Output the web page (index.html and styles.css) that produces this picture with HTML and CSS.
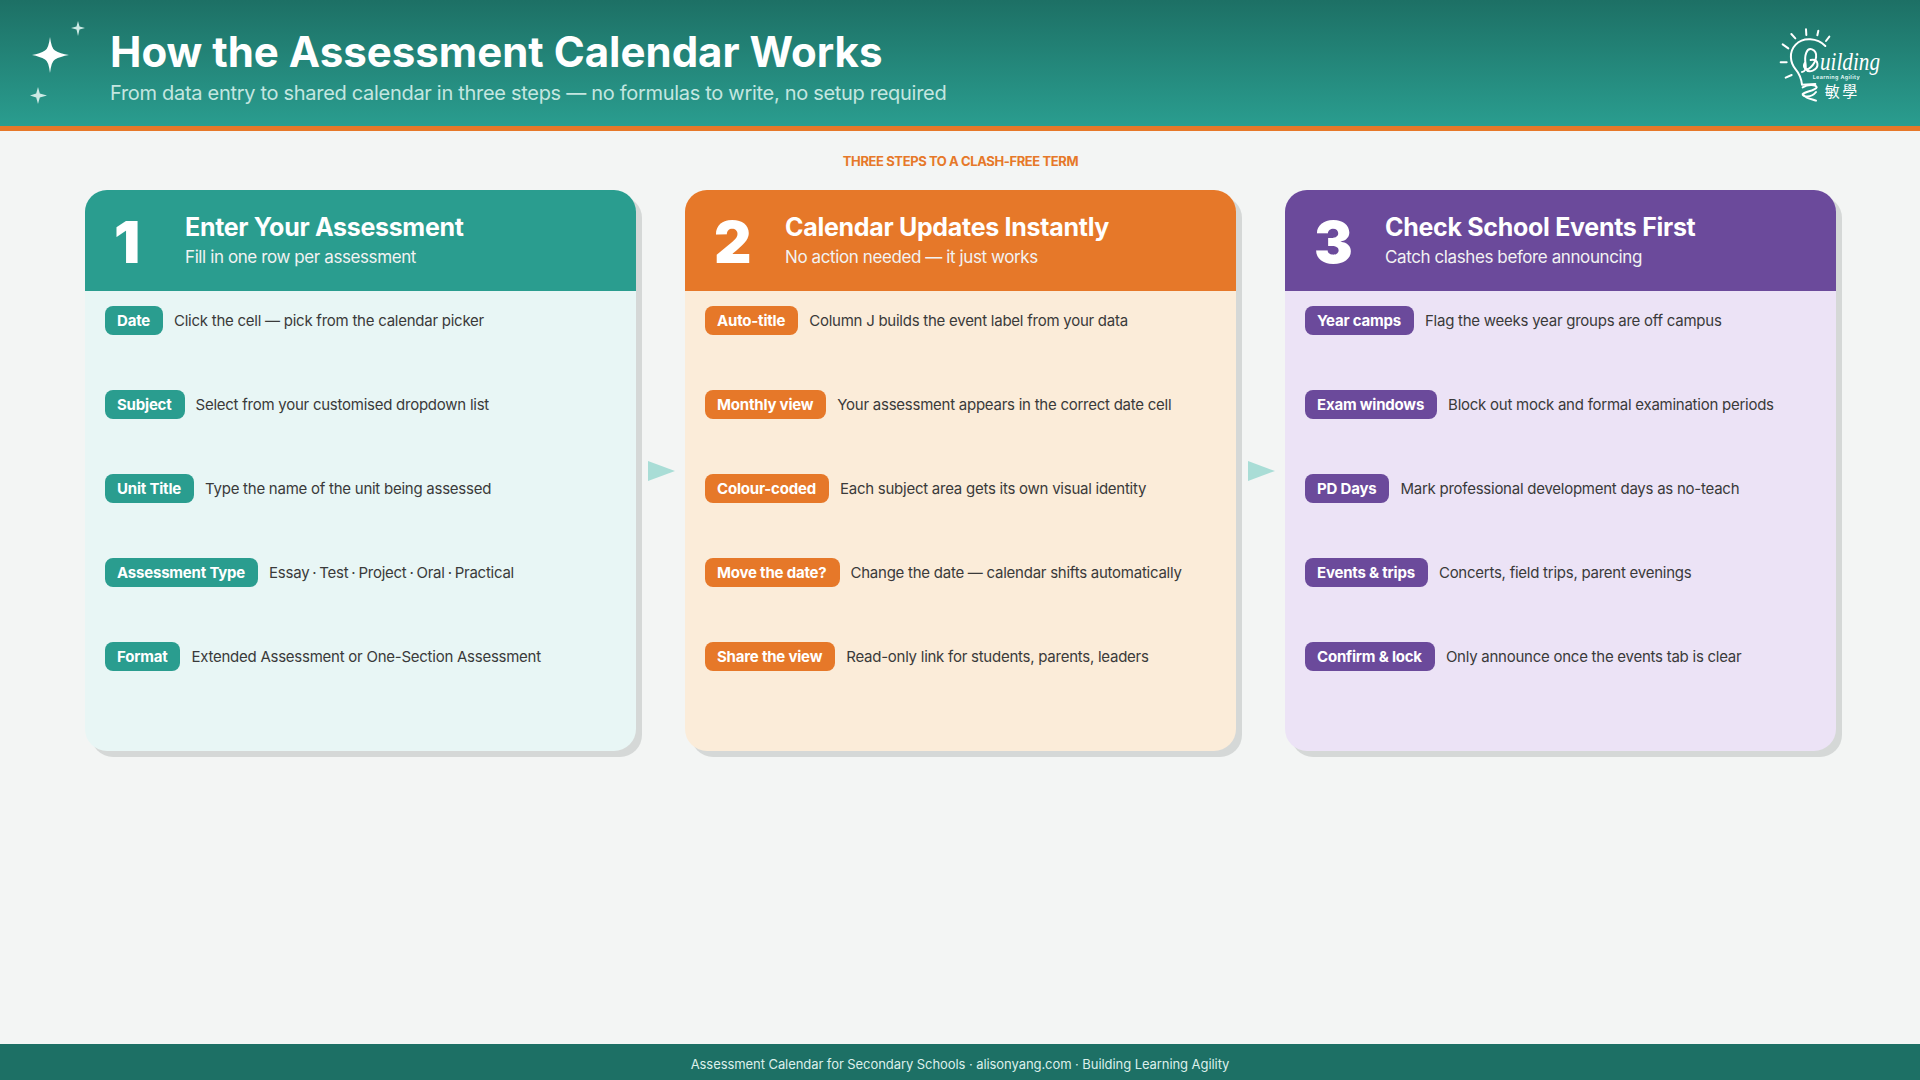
FILE: index.html
```html
<!DOCTYPE html>
<html lang="en">
<head>
<meta charset="utf-8">
<title>How the Assessment Calendar Works</title>
<link rel="stylesheet" href="styles.css">
</head>
<body>
<div class="page">
  <header class="top">
    <svg class="stars" viewBox="0 0 110 126" width="110" height="126" aria-hidden="true">
      <path class="star-a" d="M50 37 Q51.500 49 55 50.500 Q60 53.500 69 55 Q60 56.500 55 59.500 Q51.500 61 50 73 Q48.500 61 45 59.500 Q40 56.500 32 55 Q40 53.500 45 50.500 Q48.500 49 50 37 Z"/>
      <path class="star-b" d="M78 21 L79.500 26.500 L85 28 L79.500 29.500 L78 36 L76.500 29.500 L71 28 L76.500 26.500 Z"/>
      <path class="star-b" d="M38 87 L39.800 93.500 L47 95.500 L39.800 97.500 L38 104 L36.200 97.500 L30 95.500 L36.200 93.500 Z"/>
    </svg>
    <div class="top-text">
      <h1>How the Assessment Calendar Works</h1>
      <p>From data entry to shared calendar in three steps — no formulas to write, no setup required</p>
    </div>
    <svg class="logo" viewBox="0 0 540 330" width="180" height="110" aria-label="Building Learning Agility logo">
      <g class="logo-line">
        <path d="M198 58 L199 75M235 62 L232 76M268 80 L258 93M154 72 L166 85M128 103 L145 115M122 157 L140 157M137 203 L155 195"/>
        <path d="M256 108 C232 84 190 80 167 104 C146 126 150 158 167 178 C178 191 184 205 186 224 L226 222"/>
        <path d="M196 156 C186 172 198 185 212 172 C230 155 236 125 216 118 C200 113 192 135 197 165 C199 176 194 186 186 186"/>
        <path d="M212 150 C236 146 240 172 218 182 C208 186 200 182 196 176"/>
        <path d="M188 232 C205 222 228 224 230 232 C226 242 198 244 188 252 C186 262 214 264 228 246 M192 256 C200 266 220 268 228 272"/>
      </g>
      <text class="logo-script" x="240" y="180" textLength="180" lengthAdjust="spacingAndGlyphs">uilding</text>
      <text class="logo-small" x="218" y="208">Learning Agility</text>
      <text class="logo-cjk" x="254" y="260">敏學</text>
    </svg>
  </header>

  <main class="content">
    <div class="eyebrow">THREE STEPS TO A CLASH-FREE TERM</div>
    <div class="flow">
      <section class="card teal">
        <div class="card-head">
          <span class="num">1</span>
          <div><h2>Enter Your Assessment</h2><p>Fill in one row per assessment</p></div>
        </div>
        <ul class="rows">
          <li><b>Date</b><span>Click the cell — pick from the calendar picker</span></li>
          <li><b>Subject</b><span>Select from your customised dropdown list</span></li>
          <li><b>Unit Title</b><span>Type the name of the unit being assessed</span></li>
          <li><b>Assessment Type</b><span class="tight">Essay · Test · Project · Oral · Practical</span></li>
          <li><b>Format</b><span>Extended Assessment or One-Section Assessment</span></li>
        </ul>
      </section>
      <div class="arrow"></div>
      <section class="card orange">
        <div class="card-head">
          <span class="num">2</span>
          <div><h2>Calendar Updates Instantly</h2><p>No action needed — it just works</p></div>
        </div>
        <ul class="rows">
          <li><b>Auto-title</b><span>Column J builds the event label from your data</span></li>
          <li><b>Monthly view</b><span>Your assessment appears in the correct date cell</span></li>
          <li><b>Colour-coded</b><span>Each subject area gets its own visual identity</span></li>
          <li><b>Move the date?</b><span>Change the date — calendar shifts automatically</span></li>
          <li><b>Share the view</b><span>Read-only link for students, parents, leaders</span></li>
        </ul>
      </section>
      <div class="arrow"></div>
      <section class="card purple">
        <div class="card-head">
          <span class="num">3</span>
          <div><h2>Check School Events First</h2><p>Catch clashes before announcing</p></div>
        </div>
        <ul class="rows">
          <li><b>Year camps</b><span>Flag the weeks year groups are off campus</span></li>
          <li><b>Exam windows</b><span>Block out mock and formal examination periods</span></li>
          <li><b>PD Days</b><span>Mark professional development days as no-teach</span></li>
          <li><b>Events &amp; trips</b><span>Concerts, field trips, parent evenings</span></li>
          <li><b>Confirm &amp; lock</b><span>Only announce once the events tab is clear</span></li>
        </ul>
      </section>
    </div>
  </main>

  <footer class="bottom">Assessment Calendar for Secondary Schools · alisonyang.com · Building Learning Agility</footer>
</div>
</body>
</html>
```
FILE: styles.css
```css
* { box-sizing: border-box; }
html, body { margin: 0; padding: 0; }
body { font-family: Inter, "Noto Sans", sans-serif; background: #f3f5f4; color: #333; }
.page { width: 1920px; height: 1080px; display: flex; flex-direction: column; overflow: hidden; }

.top {
  height: 131px; flex: none; display: flex; align-items: flex-start;
  background: linear-gradient(180deg, #1d7065 0%, #2a9d8f 100%);
  border-bottom: 5px solid #e67829;
}
.stars { flex: none; display: block; }
.star-a { fill: #fff; }
.star-b { fill: #cdeae5; }
.top-text { flex: 1; padding-top: 26px; }
.top h1 { margin: 0; font-size: 42px; line-height: 52px; font-weight: 700; color: #fff; }
.top p { margin: 2px 0 0; font-size: 20px; line-height: 26px; color: #c4e6e0; letter-spacing: -0.3px; }
.logo { flex: none; margin: 10px 0 0; display: block; }
.logo-line { fill: none; stroke: #fff; stroke-width: 6; stroke-linecap: round; stroke-linejoin: round; }
.logo-script { font-family: "Liberation Serif", serif; font-style: italic; font-size: 76px; fill: #fff; }
.logo-small { font-family: Inter, sans-serif; font-weight: 700; font-size: 16px; letter-spacing: 1.200px; fill: #dff3ef; }
.logo-cjk { font-family: "Noto Sans CJK TC", sans-serif; font-size: 45px; letter-spacing: 8px; fill: #fff; }

.content { flex: 1; display: flex; flex-direction: column; padding: 23px 84px 0 85px; }
.eyebrow { height: 36px; line-height: 14px; text-align: center; font-size: 13px; font-weight: 700; color: #e67829; letter-spacing: -0.4px; }
.flow { display: flex; align-items: flex-start; }
.card { width: 551px; height: 561px; flex: none; border-radius: 22px; overflow: hidden; box-shadow: 6px 6px 0 #d5d8d7; }
.teal { background: #e8f6f5; --c: #2a9d8f; }
.orange { background: #fbecd9; --c: #e67829; }
.purple { background: #ece3f6; --c: #6b4a9b; }
.card-head { height: 101px; background: var(--c); display: flex; align-items: flex-start; color: #fff; }
.num { width: 100px; flex: none; padding: 17px 0 0 29px; font-size: 58px; line-height: 70px; font-weight: 900; }
.card-head h2 { margin: 21px 0 0; font-size: 25px; line-height: 32px; font-weight: 700; letter-spacing: -0.3px; }
.card-head p { margin: 3px 0 0; font-size: 17px; line-height: 22px; font-weight: 400; color: #f2f2f2; letter-spacing: -0.4px; }
.rows { list-style: none; margin: 0; padding: 15px 20px; display: flex; flex-direction: column; gap: 55px; }
.rows li { display: flex; align-items: center; gap: 11px; height: 29px; }
.rows b { background: var(--c); color: #fff; border-radius: 8px; padding: 0 13px 0 12px; line-height: 29px; font-size: 15px; font-weight: 700; white-space: nowrap; letter-spacing: -0.2px; }
.rows span { font-size: 15px; color: #3a3a3a; letter-spacing: -0.25px; white-space: nowrap; }
.rows .tight { word-spacing: -1px; }
.arrow { width: 49px; height: 561px; flex: none; display: flex; align-items: center; justify-content: center; padding-left: 1px; }
.arrow::before { content: ""; border-style: solid; border-width: 10.500px 0 10.500px 27px; border-color: transparent transparent transparent #a9ddd6; }

.bottom { height: 36px; flex: none; background: #1d7065; color: #dcefeb; font-size: 13px; line-height: 41px; text-align: center; letter-spacing: -0.07px; }
```
